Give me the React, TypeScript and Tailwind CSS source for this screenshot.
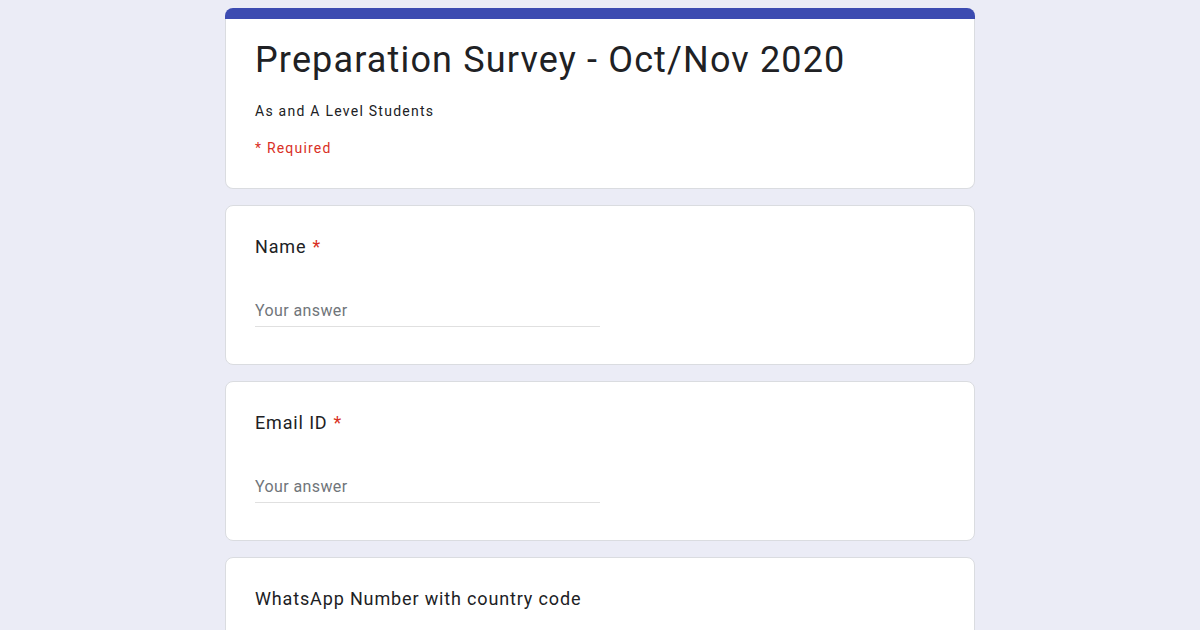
const font = { fontFamily: 'Roboto, "Liberation Sans", Arial, sans-serif' };

function Question({ label, required }: { label: string; required?: boolean }) {
  return (
    <div className="rounded-lg border border-[#dadce0] bg-white px-[29px] pt-[29px] pb-[37px]">
      <div className="h-6 text-[18px] leading-6 tracking-[0.85px] text-[#202124]">
        {label}
        {required ? <span className="ml-1.5 text-[#d93025]">*</span> : null}
      </div>
      <div className="mt-10 w-[345px] border-b border-[#e0e0e0] pb-[3px]">
        <div className="h-6 text-base leading-6 tracking-[0.4px] text-[#70757a]">Your answer</div>
      </div>
    </div>
  );
}

export default function App() {
  return (
    <div className="h-[630px] w-full overflow-hidden bg-[#ebecf6]" style={font}>
      <div className="mx-auto flex w-[750px] flex-col gap-4 pt-2">
        <div className="rounded-lg">
          <div className="h-[11px] rounded-t-lg bg-[#3c4bb1]" />
          <div className="rounded-b-lg border-x border-b border-[#dadce0] bg-white px-[29px] pt-[17px] pb-[30px]">
            <h1 className="text-[36px] leading-[48px] tracking-[1.15px] text-[#202124]">
              Preparation Survey - Oct/Nov 2020
            </h1>
            <p className="mt-[17px] text-sm leading-5 tracking-[1.25px] text-[#202124]">As and A Level Students</p>
            <p className="mt-[17px] text-sm leading-5 tracking-[1.2px] text-[#d93025]">* Required</p>
          </div>
        </div>
        <Question label="Name" required />
        <Question label="Email ID" required />
        <Question label="WhatsApp Number with country code" />
      </div>
    </div>
  );
}
